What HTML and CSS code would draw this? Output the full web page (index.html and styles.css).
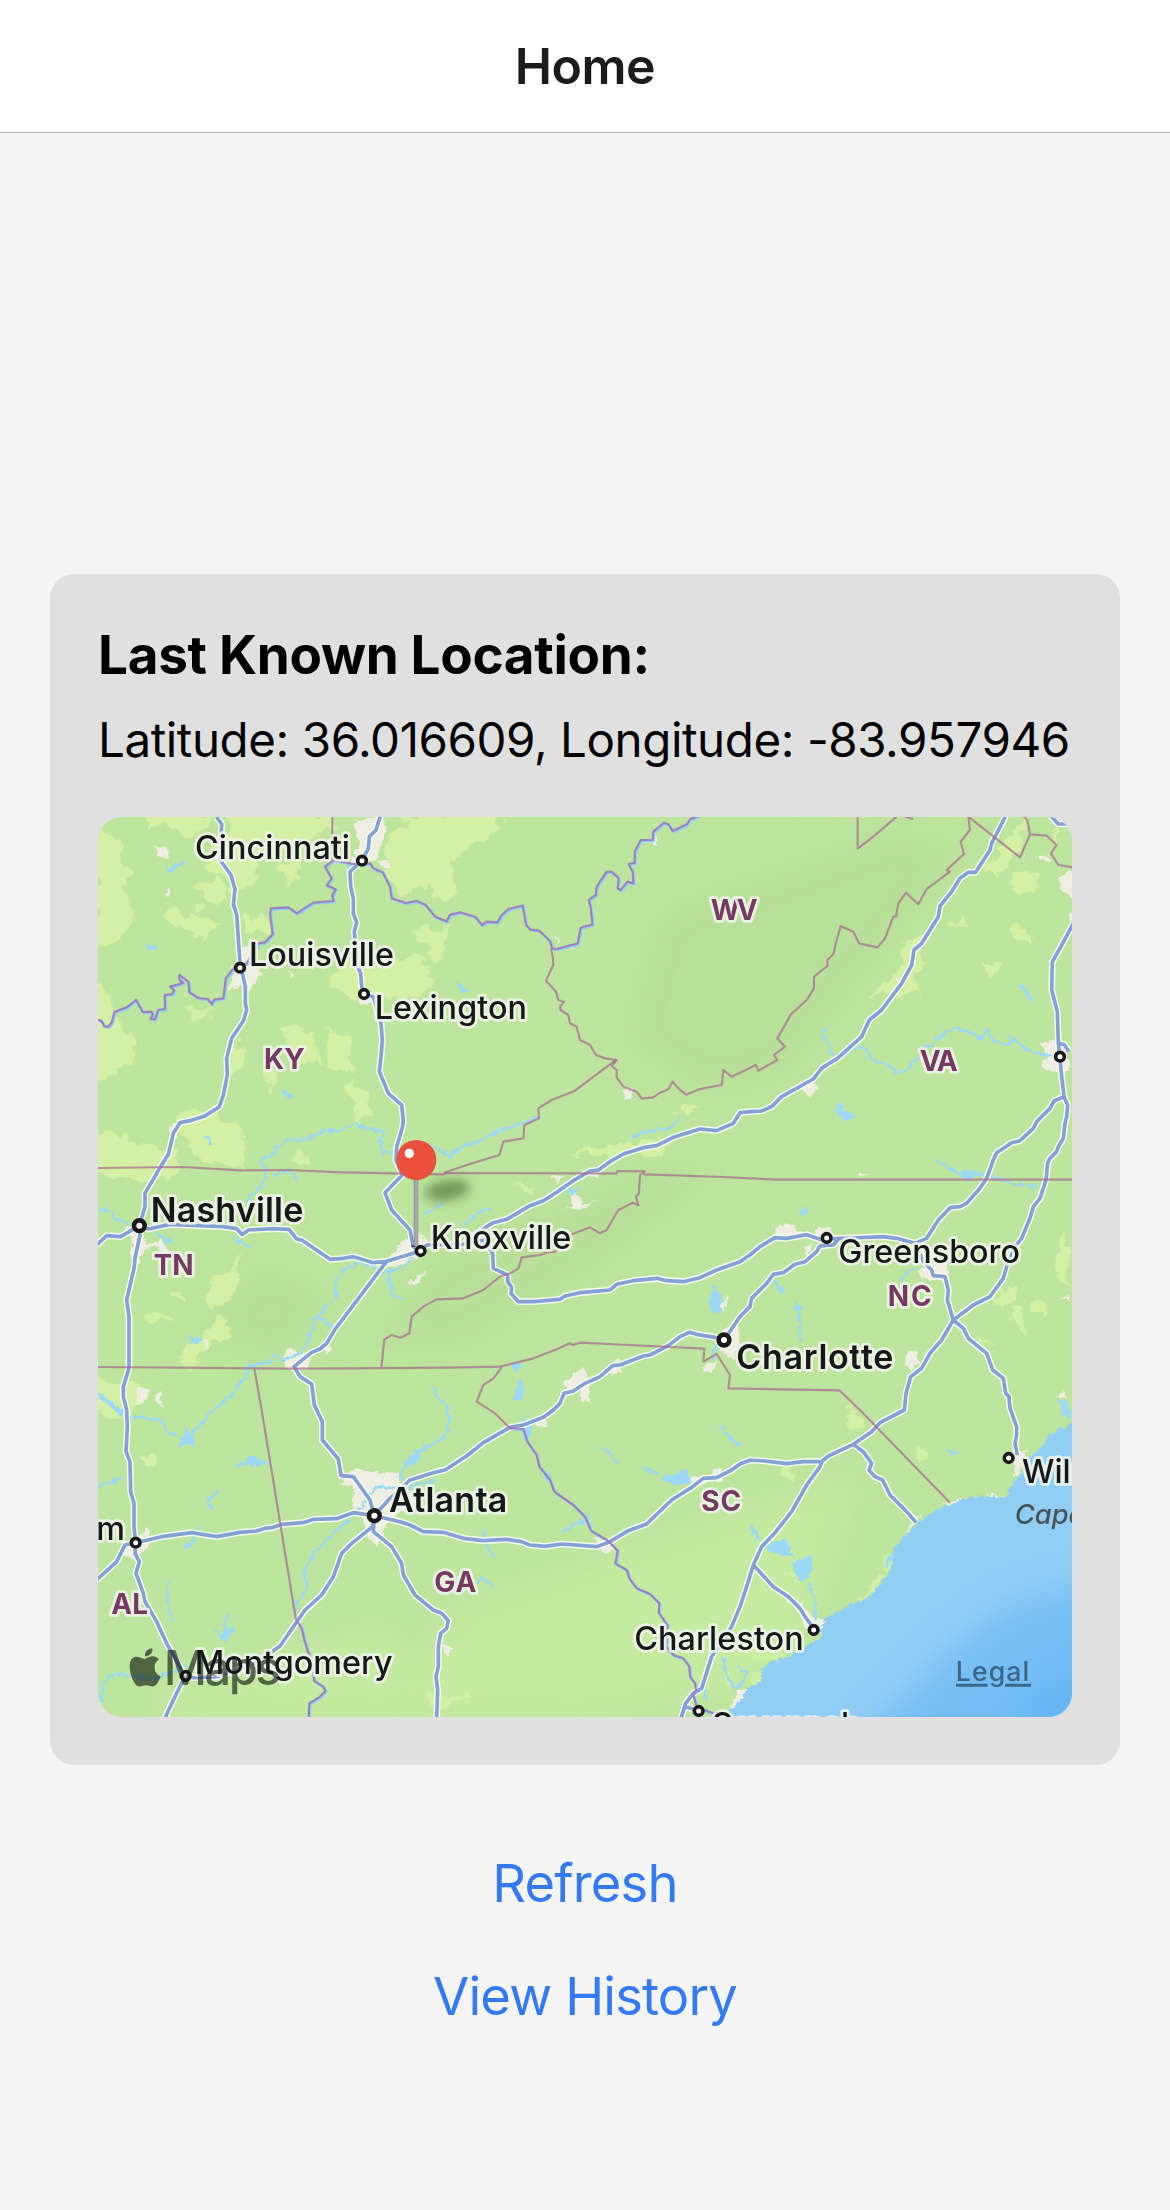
FILE: index.html
```html
<!DOCTYPE html>
<html lang="en">
<head>
<meta charset="utf-8">
<title>Home</title>
<link rel="stylesheet" href="styles.css">
</head>
<body>
<header class="navbar"><h1 class="navbar-title">Home</h1></header>
<main class="screen">
<section class="card">
<h2 class="card-title">Last Known Location:</h2>
<p class="coords">Latitude: 36.016609, Longitude: -83.957946</p>
<svg class="map" viewBox="24 21 2922 2700" role="img" aria-label="Map">
<defs>
<filter id="rough" x="-5%" y="-5%" width="110%" height="110%"><feTurbulence type="fractalNoise" baseFrequency="0.02" numOctaves="4" seed="4"/><feDisplacementMap in="SourceGraphic" scale="75" xChannelSelector="R" yChannelSelector="G"/></filter>
<filter id="rough-fine" x="-5%" y="-5%" width="110%" height="110%"><feTurbulence type="fractalNoise" baseFrequency="0.06" numOctaves="3" seed="9"/><feDisplacementMap in="SourceGraphic" scale="22" xChannelSelector="R" yChannelSelector="G"/></filter>
<filter id="soft" x="-40%" y="-40%" width="180%" height="180%"><feGaussianBlur stdDeviation="50"/></filter>
<filter id="pin-blur" x="-60%" y="-120%" width="220%" height="340%"><feGaussianBlur stdDeviation="18"/></filter>
<linearGradient id="stem" x1="0" x2="1" y1="0" y2="0"><stop offset="0" stop-color="#8d8a90"/><stop offset=".5" stop-color="#b3b0b6"/><stop offset="1" stop-color="#99969c"/></linearGradient>
<g id="roads">
<path d="M380 21L395 42 390 150 423 195 435 238 430 283 440 313 450 460 466 530 466 580 470 600 460 633 425 685 410 745 412 795 400 855 388 890 345 918 300 932 270 938 250 970 235 1033 210 1073 165 1150 165 1190 148 1247 150 1275 135 1345 132 1375 110 1470 117 1520 117 1675 100 1730 100 1760 110 1800 112 1850 108 1925 120 1955 122 2045 132 2080 132 2150 137 2198 135 2230 148 2255 138 2290 160 2350 165 2375 200 2435 230 2500 285 2598 250 2670 225 2725"/>
<path d="M137 2198L105 2205 80 2255 20 2310M137 2198L215 2180 305 2168 380 2180 450 2167 500 2163 525 2155 550 2152 575 2143 640 2138 670 2128 740 2126 790 2108 853 2117 930 2135 960 2145 1000 2165 1060 2167 1125 2186 1180 2192 1250 2188 1295 2195 1320 2205 1365 2209 1415 2202 1520 2210 1560 2195 1615 2162 1670 2142 1745 2070 1805 2032 1840 2005 1880 2003 1925 1980 1950 1962 1980 1950 2025 1953 2090 1961 2140 1955 2190 1955"/>
<path d="M2950 340L2910 415 2887 455 2885 540 2902 605 2905 700 2910 740 2913 780 2922 860 2892 873 2880 895 2840 935 2830 955 2790 992 2765 998 2720 1028 2710 1050 2690 1105 2670 1135 2630 1180 2610 1190 2580 1193 2545 1230 2510 1285 2475 1300M2905 700L2923 704 2937 725M2922 860L2933 885 2930 920 2925 940 2920 985 2905 1010 2900 1025 2880 1045 2873 1060 2868 1110 2850 1165 2830 1190 2820 1225 2805 1260 2795 1285 2775 1310 2750 1370 2740 1405 2700 1460 2650 1485 2590 1530 2555 1590 2520 1630 2495 1675 2462 1700 2448 1750 2443 1800 2370 1838 2345 1865 2290 1903 2215 1938 2195 1955 2190 1970 2150 2025 2105 2105 2055 2168 2015 2210 1990 2265 1970 2330 1950 2390 1925 2450 1865 2540 1835 2635 1810 2650 1787 2680 1773 2725M1787 2690L1826 2703"/>
<path d="M1990 2265L2050 2330 2095 2360 2130 2395 2145 2420 2160 2440 2171 2460M2290 1903L2320 1925 2345 1960 2337 1980 2355 2000 2378 2010 2400 2055 2450 2105 2478 2137M2590 1530L2620 1555 2635 1585 2690 1630 2708 1680 2740 1705 2747 1750 2757 1760 2760 1795 2780 1850 2780 1875 2775 1900 2782 1935"/>
<path d="M853 2117L900 2065 960 2010 1035 1987 1065 1980 1130 1938 1180 1898 1260 1852 1300 1845 1360 1822 1390 1800 1410 1780 1422 1750 1450 1743 1485 1720 1530 1700 1568 1667 1590 1665 1660 1638 1680 1635 1735 1607 1770 1580 1798 1567 1820 1573 1875 1582 1902 1590 1950 1520 1980 1490 1985 1465 2030 1420 2050 1393 2080 1388 2115 1363 2145 1355 2180 1325 2190 1308 2230 1305 2245 1288"/>
<path d="M1120 1303L1180 1290 1208 1330 1210 1375 1253 1395 1253 1415 1265 1432 1263 1450 1285 1475 1330 1475 1410 1468 1425 1458 1470 1448 1560 1440 1580 1423 1630 1412 1700 1405 1730 1412 1780 1415 1830 1403 1880 1380 1950 1355 1980 1335 2010 1310 2055 1283 2090 1285 2150 1274 2190 1288 2380 1280 2420 1285 2475 1300 2500 1355 2525 1380 2530 1397 2565 1400 2575 1440 2572 1470 2590 1530"/>
<path d="M992 1323L1010 1305 1120 1303 1160 1270 1190 1250 1210 1238 1250 1228 1320 1187 1360 1172 1380 1160 1450 1112 1500 1083 1525 1080 1560 1055 1600 1032 1660 1013 1700 1007 1750 982 1830 957 1880 962 1930 940 1950 908 1980 905 2015 903 2045 890 2075 860 2170 807 2195 775 2245 743 2315 680 2338 630 2375 600 2435 520 2465 465 2472 420 2495 400 2545 320 2550 288 2585 245 2610 205 2635 187 2657 187 2700 120 2705 100 2747 18M2883 18L2905 42 2930 42"/>
<path d="M872 15L858 60 838 80 835 115 816 152 780 185 782 230 790 265 790 310 800 337 793 365 803 470 812 490 815 530 822 552 850 560 873 640 877 690 873 740 868 785 895 850 935 885 940 930 938 950 920 1010 918 1050 937 1095 885 1148 905 1200 960 1260 970 1310 985 1325"/>
<path d="M20 1305L50 1277 92 1280 148 1247 175 1257 240 1243 400 1250 440 1256 457 1274 475 1260 550 1256 597 1258 620 1287 635 1290 720 1348 760 1345 790 1340 850 1358 890 1354 992 1323M890 1354L855 1400 735 1558 710 1600 690 1617 665 1627 612 1670 630 1700 665 1722 673 1785 697 1835 697 1890 745 1947 753 1997 790 2000 840 2070 853 2117 848 2150 785 2200 755 2230 730 2300 695 2355 645 2400 570 2508 540 2530 490 2560 380 2600 310 2603 287 2598"/>
<path d="M853 2117L850 2165 905 2210 935 2260 940 2295 975 2355 1030 2400 1055 2410 1075 2432 1070 2455 1052 2470 1045 2510 1045 2570 1038 2600 1043 2640 1040 2725"/>
</g>
<g id="river-borders">
<path d="M24 630L34 632 42 648 55 650 65 637 74 605 110 592 138 570 158 606 183 605 188 612 182 626 195 628 204 600 225 597 224 555 247 552 252 540 240 530 262 524 280 518 268 510 268 495 295 515 298 547 325 564 353 567 365 582 373 569 400 565 407 505 430 475 470 460 482 440 505 400 525 397 548 372 540 312 543 295 595 292 620 310 670 278 730 273 727 255 737 238 710 226 725 205 705 170 730 150 790 162 840 160 850 175 878 187 900 230 905 265 947 279 980 273 1007 285 1035 320 1070 334 1080 314 1110 307 1155 320 1176 345 1190 335 1222 337 1233 318 1255 297 1298 287 1308 345 1320 358 1348 362 1380 393 1386 415 1400 417 1463 400 1472 353 1507 343 1502 292 1496 270 1517 255 1520 230 1550 185 1565 185 1586 205 1583 235 1592 240 1612 215 1630 220 1628 185 1616 162 1634 158 1634 125 1652 90 1688 90 1690 65 1722 38 1735 43 1748 63 1790 43 1800 28 1825 18"/>
<path d="M1260 1855L1300 1857 1312 1895 1340 1935 1348 1970 1380 2010 1393 2045 1450 2085 1485 2120 1503 2162 1555 2193 1583 2222 1576 2260 1610 2280 1618 2305 1640 2335 1680 2352 1708 2380 1706 2408 1732 2445 1728 2510 1750 2535 1780 2545 1798 2570 1800 2600 1815 2620 1818 2640 1810 2655 1820 2690 1870 2710 1900 2712"/>
<path d="M620 2432L635 2455 643 2490 652 2520 668 2560 672 2612 700 2630 706 2643 690 2660 658 2680 656 2722"/>
</g>
<g id="borders">
<path d="M727 18V150M1383 415L1388 440 1390 465 1380 485 1368 512 1398 545 1405 570 1422 576 1410 590 1412 600 1435 615 1440 640 1460 650 1470 690 1500 705 1518 735 1545 745 1580 750 1565 768 1580 780 1580 803 1600 830 1640 845 1655 866 1690 862 1710 848 1735 838 1748 815 1765 835 1788 854 1830 837 1895 825 1898 800 1900 780 1925 800 1998 765 2005 782 2062 750 2052 735 2085 710 2062 685 2085 645 2103 613 2150 570 2172 535 2172 500 2212 468 2212 450 2230 433 2240 390 2252 348 2290 365 2307 400 2362 412 2385 385 2410 320 2418 320 2425 280 2448 248 2485 283 2510 237 2560 200 2580 185 2570 180 2622 132 2612 95 2640 60 2635 20 2790 142 2820 73 2812 30 2800 18M2303 18V116L2350 80 2420 20M2440 18L2470 28M2820 73L2870 77 2900 105 2883 130 2905 165 2950 172"/>
<path d="M1580 748L1455 842 1385 870 1345 895 1347 925 1303 945 1300 985 1240 995 1228 1035 1140 1062 1062 1088"/>
<path d="M20 1074L280 1071 450 1081 600 1080 750 1087 1062 1093 1068 1089 1580 1090 1582 1083 1665 1084 1650 1095 1647 1150 1638 1160 1645 1186 1628 1178 1585 1200 1550 1260 1530 1270 1500 1252 1440 1275 1395 1325 1370 1328 1350 1335 1295 1342 1285 1375 1265 1388 1232 1398 1180 1440 1120 1465 1040 1468 1000 1490 965 1520 960 1550M990 1500L965 1520 958 1570 932 1583 905 1575 883 1588 874 1672M1660 1093L1900 1101 2060 1109 2950 1109M20 1671L600 1676 1080 1673 1230 1670 1330 1645 1400 1618 1440 1600 1448 1605 1470 1598 1843 1616 1840 1655 1880 1632 1920 1695 1915 1735 2080 1738 2248 1741 2310 1800 2580 2078M493 1676L515 1800 618 2430M1235 1672L1210 1705 1180 1725 1160 1775 1215 1810 1260 1855"/>
</g>
</defs>
<rect class="land" x="24" y="21" width="2922" height="2700"/>
<g filter="url(#soft)">
<path class="shade" d="M1700 300L2400 60 2650 100 2450 350 2100 800 1850 860 1600 700ZM1000 1350L1700 1050 1900 1080 1500 1400 1100 1620 850 1620ZM500 1350L750 1450 600 1650 300 1600Z"/>
<path class="bright" d="M1100 2400L2300 2000 2100 2600 1500 2720H900ZM200 2650L900 2450 1000 2720H200Z"/>
</g>
<g class="field" filter="url(#rough)">
<path d="M10 50L100 90 80 150 125 200 105 250 130 290 120 350 90 390 10 420ZM10 520L60 560 70 640 130 670 120 780 60 790 10 860ZM180 10H365L370 50 300 70 200 50ZM400 10H730V60L640 70 620 100 560 130 500 130 490 190 520 200 470 240 430 240 420 190 360 190 370 110 420 80ZM240 280L290 310 350 305 385 350 350 385 290 370 235 330ZM330 230L380 200 420 220 415 280 350 285ZM460 300L530 330 540 400 500 385 460 350ZM570 160L620 150 630 200 580 215ZM890 90L960 60 990 120 1020 110 1010 230 930 260 880 190ZM960 10H1220L1240 50 1140 100 1100 130 1080 180 1110 250 1040 270 1010 230 1000 130 960 110ZM720 480L780 450 900 430 1000 450 1030 520 980 560 870 570 780 560 730 520ZM990 340L1080 360 1070 460 1010 440ZM290 590L350 590 360 620 310 630ZM410 690L480 720 460 780 430 790 420 740ZM540 780L580 790 540 850 520 820ZM580 640L660 670 700 760 650 760 590 700ZM700 650L770 680 780 770 730 780ZM780 800L830 860 850 930 800 950 780 880ZM10 965L110 985 160 1010 270 1030 240 1110 140 1110 50 1100 10 1090ZM270 900L380 900 460 960 470 1070 330 1060 290 990ZM620 1010L660 1050 650 1070 610 1050ZM350 1410L420 1370 440 1330 450 1380 430 1480 370 1500ZM180 1500L250 1520 250 1540 190 1530ZM240 1440L290 1450 300 1475 240 1470ZM385 1510L410 1530 410 1570 360 1610 300 1660 260 1660 290 1610 370 1560ZM10 1710L100 1720 190 1750 80 1820 10 1800ZM160 1930L210 1920 200 1955 165 1955Z"/>
<path d="M2430 410L2480 370 2510 380 2485 480 2490 550 2420 550 2410 500 2450 450ZM2575 330L2620 310 2625 350 2590 360ZM2760 200L2800 160 2850 190 2840 230 2790 250 2760 230ZM2690 170L2750 80 2790 60 2800 110 2740 170 2720 200ZM2790 40L2810 45 2800 90 2785 80ZM2900 50L2920 50 2905 110 2890 90ZM2770 350L2830 355 2820 385 2765 380ZM2680 480L2730 450 2720 490 2690 510ZM2340 560L2430 500 2400 560ZM1770 900L1820 880 1800 915 1750 915ZM1430 1040L1600 1000 1760 990 1690 1030 1560 1040ZM1280 1120L1340 1105 1310 1140ZM2660 1455L2690 1465 2660 1480ZM2710 1450L2760 1445 2775 1480 2730 1490ZM2765 1500L2800 1500 2805 1580 2775 1550ZM2835 1480L2870 1475 2860 1510 2835 1500ZM2890 1350L2925 1270 2940 1300 2925 1420 2900 1400ZM2640 1570L2700 1590 2725 1615 2660 1590ZM2270 1790L2320 1830 2330 1860 2265 1850ZM2075 1970L2125 1990 2110 2025 2085 2010ZM2465 1930L2510 1910 2520 1940 2480 1960ZM1010 2670L1050 2650 1130 2670 1080 2695 1020 2695ZM2100 2290L2130 2290 2125 2310ZM2370 2300L2390 2310 2340 2370 2300 2370 2340 2330Z"/>
</g>
<g filter="url(#rough-fine)">
<path class="sea" d="M2970 1835L2925 1850 2880 1875 2850 1915 2820 1940 2785 2000 2755 2035 2755 2060 2700 2055 2650 2060 2600 2070 2560 2090 2520 2110 2470 2150 2430 2195 2400 2230 2400 2270 2390 2300 2350 2345 2320 2370 2280 2380 2240 2410 2190 2430 2190 2480 2150 2510 2090 2540 2030 2560 2000 2590 1990 2620 1960 2640 1940 2680 1890 2740H2970Z"/>
</g>
<g filter="url(#soft)"><path class="deep" d="M3050 2310L2760 2390 2620 2500 2560 2550 2480 2640 2250 2850H3050Z"/><path class="deeper" d="M3050 2540L2860 2640 2700 2850H3050Z"/></g>
<g class="coast" filter="url(#rough-fine)"><path d="M2380 2240L2400 2230 2410 2260 2385 2290ZM1985 2520L2050 2530 2100 2540 2030 2550 1985 2550ZM1985 2590L2020 2580 2010 2620 1985 2625ZM1900 2600L1920 2580 1930 2620 1910 2640Z"/></g>
<g class="urban" filter="url(#rough-fine)">
<path d="M790 40L830 22H880L890 60 860 140 850 155 800 175 780 160 810 100ZM195 105L240 120 235 145 205 135ZM865 150L895 150 905 178 870 170ZM230 240L240 235 240 255 230 258ZM450 415L480 400 475 460 515 490 475 545 465 520 410 545 430 490 420 470 450 460ZM800 560L840 545 850 580 810 585ZM595 480L615 490 605 505ZM240 950L255 940 260 990 235 960ZM120 1250L160 1275 170 1305 215 1290 240 1330 230 1360 205 1305 165 1320 140 1370 120 1340 130 1300 100 1250ZM930 1300L985 1270 1020 1300 1000 1340 910 1370 880 1370ZM980 1400L1010 1380 980 1425 950 1420ZM580 1640L600 1610 660 1650 650 1680 590 1680ZM140 1730L180 1740 160 1780 145 1780ZM190 1765L220 1740 210 1770 225 1800 200 1780ZM755 2020L795 1970 840 1985 930 1990 930 2030 960 2040 980 2080 900 2130 880 2160 860 2205 830 2180 820 2130 790 2090 790 2030ZM130 2180L180 2150 175 2210 130 2250 85 2230ZM335 1590L355 1590 350 1620ZM705 1605L720 1605 720 1630 705 1630ZM1390 375L1410 390 1405 400ZM1420 412L1450 405 1450 418ZM1680 95L1700 65 1705 90 1690 105ZM1600 845L1625 830V868L1605 865ZM1380 1100L1425 1095 1405 1120ZM1425 1195L1450 1190 1440 1150 1470 1155 1480 1185 1515 1170 1480 1200ZM1490 1095L1530 1085 1520 1105ZM1420 1720L1480 1670 1495 1710 1500 1775 1475 1770 1470 1730 1430 1740ZM1555 1680L1585 1640 1600 1680 1570 1700ZM1330 1840L1370 1820 1375 1855ZM1510 2180L1560 2190 1570 2220 1545 2230ZM1790 2000L1850 2000 1890 1970 1900 2010 1840 2020 1800 2040ZM1050 2500L1090 2515 1070 2535ZM1870 1600L1890 1570 1940 1530 1950 1600 1930 1650 1890 1620ZM1835 1670L1880 1655 1860 1695ZM1890 1480L1920 1450 1900 1510ZM2055 1250L2100 1240 2140 1270 2060 1285ZM2170 1260L2220 1250 2235 1280 2180 1295ZM2145 1310L2170 1300 2150 1345ZM2485 1380L2520 1370 2575 1350V1410L2490 1405ZM2450 1630L2480 1620 2485 1660 2460 1685 2445 1660ZM2130 835L2165 815 2190 835 2160 860ZM2850 700L2890 690 2930 720 2940 780 2900 790 2850 770 2870 740ZM2905 200L2960 175V265L2910 240ZM2935 310L2960 310V350ZM2410 505L2430 500 2420 515ZM2470 405L2500 420 2480 420ZM2840 140H2880L2880 155 2850 150ZM2090 2370L2125 2370 2165 2420 2205 2430 2190 2470 2150 2460 2130 2410ZM2480 2120L2500 2110 2440 2180ZM2770 1930L2815 1920 2775 2010ZM2550 2080L2620 2065 2580 2085ZM2690 2050L2760 2060 2700 2058ZM1920 2690L1950 2640 1970 2640 1930 2700ZM2910 1465L2935 1455 2940 1470ZM2910 1760L2920 1735 2930 1765ZM2300 1090L2345 1090 2320 1098Z"/>
</g>
<g class="river" filter="url(#rough-fine)">
<path d="M1350 920L1290 945 1220 965 1180 990 1110 1010 1078 1043 1045 1015 1000 1000M910 1025L875 1030 870 1000 880 965 830 955 800 940 760 960 700 965 660 985 600 990 560 1010 550 1030 510 1055 530 1080 515 1130 490 1150 470 1180M550 1100L600 1075 620 1110M345 975L365 1005M24 1195L60 1205 80 1230 120 1240M970 1340L940 1370 880 1390 820 1355 760 1380 735 1420 740 1460 710 1490 680 1520 650 1600 630 1630 580 1650 560 1635 530 1660 480 1665 465 1700 430 1750 350 1820 290 1890 240 1870 210 1830 120 1820 24 1760M680 1515L740 1560M895 1390L905 1450 940 1470M430 1280L470 1310 480 1310M440 1970L490 1950 540 1960M24 2030L100 2005M385 2040L355 2070 365 2100M330 2150L310 2190 285 2220M235 2310L230 2380 250 2440M415 2410L400 2470 430 2450M35 2675L40 2620 75 2590 130 2600 180 2610 240 2590 290 2570M1040 2010L935 2035 860 2030 800 2110 740 2160 680 2220 655 2260 640 2290 655 2330 620 2380 620 2430M930 2010L945 1960 975 1930 1020 1910 1065 1880 1080 1830 1070 1790 1040 1760 1030 1735M1630 980L1670 965 1700 960 1740 955 1770 920M1120 1250L1160 1210 1210 1190M1000 1210L1060 1180M2215 650L2195 668 2220 710 2230 740M2245 740L2300 712 2330 715 2345 750 2390 760 2420 790 2450 780 2490 735 2500 710 2530 705 2535 685 2555 683 2560 663 2600 655 2640 668 2670 685 2693 663 2710 690 2755 710 2768 685 2800 715 2860 735 2910 742M2785 520L2825 560M2540 1050L2600 1090 2640 1085 2720 1105 2760 1120 2840 1130M2470 1370L2440 1400 2435 1420M2120 1480L2130 1530 2130 1590M1880 1600L1870 1650M1535 1910L1585 1960M1890 1845L1920 1885 1950 1905M1660 1975L1700 1990M1410 2170L1460 2140 1490 2130M1180 2160L1190 2210 1215 2240M1160 2320L1180 2305 1210 2330M2155 2320L2175 2370 2175 2430M1900 2540L1910 2600 1940 2640 1970 2590 1950 2570M1850 2670L1840 2630M2920 1800L2945 1810"/>
</g>
<g class="lake" filter="url(#rough-fine)">
<path d="M230 175L285 155 270 170 235 190ZM170 405L205 415 180 420ZM575 840L605 860 590 865ZM1108 525L1130 545 1115 548ZM2235 900L2245 880 2270 910 2290 920 2260 930ZM2815 550L2830 565 2810 565ZM2600 1090L2660 1095 2630 1110ZM1860 1470L1875 1430 1895 1460 1885 1510 1865 1500ZM270 1910L290 1860 310 1900ZM470 1950L490 1940 520 1960 480 1970ZM195 1260L250 1300 210 1285ZM300 1580L335 1590 305 1600ZM24 1750L110 1810 90 1815ZM375 2460L400 2475 430 2460 405 2490ZM1300 1820L1325 1850 1310 1890 1295 1870ZM1270 1770L1290 1710 1300 1740 1290 1770ZM1270 1660L1295 1665 1280 1680ZM1490 2110L1500 2150 1485 2130ZM1365 1985L1380 2000 1370 2010ZM1720 2005L1790 1980 1800 2020 1750 2020ZM1980 2140L2010 2180 2000 2190ZM2020 2210L2085 2190 2110 2240 2060 2230ZM2105 2260L2165 2240 2160 2300 2130 2310ZM2575 1920L2605 1925 2590 1935ZM940 1960L970 1940 985 1955 950 1970ZM960 1945L1000 1910 980 1955ZM2130 1210L2150 1190 2140 1215ZM2910 1770L2930 1780 2940 1820 2920 1815ZM775 170L790 165 785 180ZM1430 1145L1460 1135 1450 1150ZM2050 1410L2085 1440 2070 1445ZM2115 1490L2130 1490 2125 1520ZM2395 2240L2410 2230 2390 2270Z"/>
</g>
<use href="#river-borders" class="river-under" x="3" y="3"/>
<use href="#roads" class="road-casing"/>
<use href="#roads" class="road"/>
<g class="detail"><use href="#borders" class="border"/><use href="#river-borders" class="river-border"/></g>
<g class="dots">
<g class="dot"><circle cx="816" cy="152" r="13"/><circle cx="450" cy="473" r="13"/><circle cx="822" cy="552" r="13"/><circle cx="992" cy="1323" r="13"/><circle cx="2210" cy="1284" r="13"/><circle cx="137" cy="2198" r="13"/><circle cx="287" cy="2598" r="13"/><circle cx="2171" cy="2460" r="13"/><circle cx="2910" cy="740" r="13"/><circle cx="2756" cy="1944" r="13"/><circle cx="1826" cy="2703" r="13"/></g>
<g class="dot dot-large"><circle cx="148" cy="1247" r="16"/><circle cx="1902" cy="1590" r="16"/><circle cx="853" cy="2117" r="16"/></g>
</g>
<g class="city">
<text x="315" y="147" textLength="465">Cincinnati</text>
<text x="477" y="468" textLength="435">Louisville</text>
<text x="854" y="628" textLength="457">Lexington</text>
<text x="1022" y="1316" textLength="422">Knoxville</text>
<text x="2245" y="1360" textLength="545">Greensboro</text>
<text x="314" y="2592" textLength="594">Montgomery</text>
<text x="19" y="2191">m</text>
<text x="1633" y="2519" textLength="508">Charleston</text>
<text x="2796" y="2020">Wilmington</text>
<text x="1866" y="2779" textLength="445">Savannah</text>
</g>
<g class="city city-large">
<text x="182" y="1236" textLength="458">Nashville</text>
<text x="1939" y="1678" textLength="471">Charlotte</text>
<text x="897" y="2105" textLength="355">Atlanta</text>
</g>
<g class="state">
<text x="522" y="777" textLength="122">KY</text><text x="1862" y="329" textLength="141">WV</text><text x="2489" y="783" textLength="114">VA</text><text x="191" y="1395" textLength="120">TN</text><text x="2393" y="1488" textLength="132">NC</text><text x="64" y="2411" textLength="110">AL</text><text x="1033" y="2346" textLength="126">GA</text><text x="1834" y="2102" textLength="120">SC</text>
</g>
<text class="sea-label" x="2774" y="2142">Cape Fear</text>
<g class="wordmark">
<path d="M166 744C153 744 144 734 132 739 111 748 119 791 132 813 139 825 146 829 156 825 163 822 172 822 179 825 190 829 197 824 203 815 209 806 211 800 212 796 190 788 187 758 207 745 196 732 181 733 166 744ZM165 736C164 721 173 714 187 712 190 724 180 736 165 736Z" transform="translate(0 1803)"/>
<text x="221" y="2626" textLength="352">Maps</text>
</g>
<text class="legal" x="2597" y="2612" textLength="221">Legal</text><path class="legal-line" d="M2598 2626H2693M2745 2626H2823"/>
<ellipse class="pin-shadow" cx="1072" cy="1141" rx="68" ry="30" transform="rotate(-10 1072 1141)" filter="url(#pin-blur)"/>
<path class="pin-foot" d="M964 1308H978"/>
<rect x="971" y="1095" width="14" height="214" rx="5" fill="url(#stem)"/>
<circle class="pin-head" cx="979" cy="1050" r="60"/><circle class="pin-glint" cx="958" cy="1030" r="14"/>
</svg>
</section>
<nav class="actions"><button class="action" type="button">Refresh</button><button class="action" type="button">View History</button></nav>
</main>
</body>
</html>
```
FILE: styles.css
```css
* { box-sizing: border-box; margin: 0; padding: 0; }
body { display: flex; flex-direction: column; width: 1170px; height: 2210px; background: #f5f5f5; color: #000; font-family: Inter, "Liberation Sans", sans-serif; overflow: hidden; }
.navbar { display: flex; flex: none; align-items: center; justify-content: center; height: 133px; background: #fff; border-bottom: 1px solid #b0b0b0; }
.navbar-title { font-size: 50px; line-height: 60px; font-weight: 600; letter-spacing: -.5px; color: #1b1b1b; }
.screen { display: flex; flex: 1; flex-direction: column; align-items: stretch; padding: 441px 50px 0; }
.card { display: flex; flex-direction: column; height: 1191px; padding: 48px; background: #e0e0e0; border-radius: 24px; }
.card-title { font-size: 53px; line-height: 66px; font-weight: 700; letter-spacing: -.3px; white-space: nowrap; }
.coords { margin-top: 23px; font-size: 47.5px; line-height: 57px; letter-spacing: -.43px; white-space: nowrap; }
.map { display: block; width: 974px; height: 900px; margin-top: auto; border-radius: 24px; }
.actions { display: flex; flex-direction: column; align-items: center; padding-top: 85px; gap: 47px; }
.action { border: 0; background: none; color: #347af6; font: 400 52.5px/66px Inter, "Liberation Sans", sans-serif; letter-spacing: -.85px; }

.land { fill: #bee59d; }
.shade { fill: #b2da93; opacity: .45; }
.bright { fill: #c5eba1; }
.field { fill: #d4f0a5; }
.sea { fill: #91cef6; }
.deep { fill: #75bdf4; }
.deeper { fill: #63b5f3; }
.coast { fill: #cdeea5; }
.urban { fill: #eeefe2; }
.river { fill: none; stroke: #9bd9f6; stroke-width: 8; stroke-linejoin: round; }
.lake { fill: #9bd9f6; stroke: #9bd9f6; stroke-width: 6; }
.river-under { fill: none; stroke: #8fcff8; stroke-width: 8; }
.road-casing, .road { fill: none; stroke-linejoin: round; }
.road-casing { stroke: #f7faf2; stroke-width: 20; }
.road { stroke: #83a1d3; stroke-width: 11; }
.detail { fill: none; stroke-linejoin: round; }
.border { stroke: #a5658f; stroke-opacity: .68; stroke-width: 6.5; }
.river-border { stroke: #9d72b8; stroke-opacity: .85; stroke-width: 6.5; }
.dot { fill: #fff; stroke: #191919; stroke-width: 11; }
.dot-large { stroke-width: 14; }
.dots { filter: drop-shadow(0 0 2px #fff); }
.city, .state { paint-order: stroke; stroke: #eff3e9; stroke-opacity: .88; stroke-width: 17; stroke-linejoin: round; }
.city { fill: #161817; font-size: 97px; font-weight: 500; }
.city-large { font-size: 102px; font-weight: 600; }
.state { fill: #763a62; font-size: 84px; font-weight: 700; }
.sea-label { fill: #47545c; font-size: 82px; font-style: italic; font-weight: 500; }
.wordmark { fill: #101b10; opacity: .64; font-size: 142px; font-weight: 500; }
.legal { fill: #3c6788; font-size: 80px; font-weight: 500; }
.legal-line { stroke: #3c6788; stroke-width: 9; }
.pin-shadow { fill: #3a5b2f; opacity: .6; }
.pin-foot { stroke: #4a4a48; stroke-width: 6; }
.pin-head { fill: #eb4f3d; }
.pin-glint { fill: #fff; }
```
